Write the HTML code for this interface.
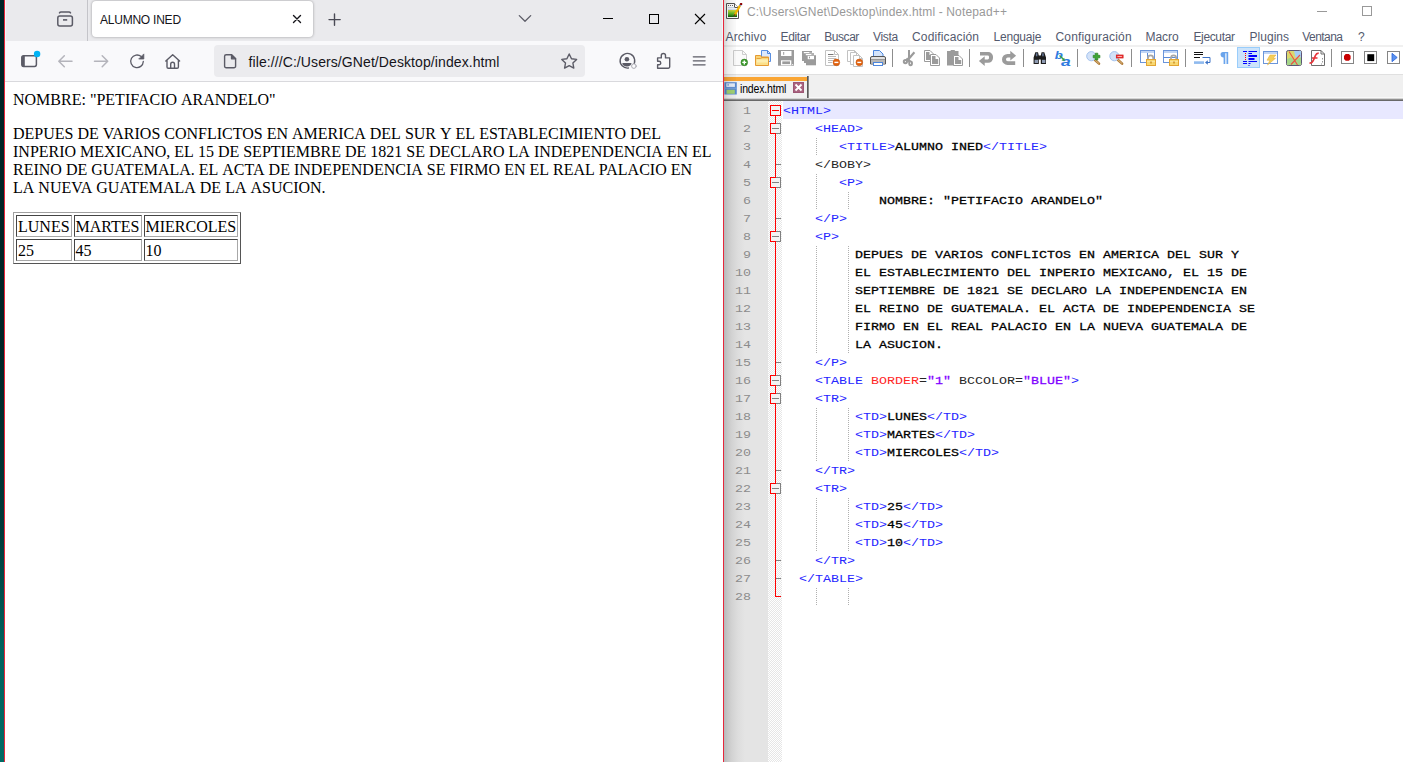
<!DOCTYPE html>
<html><head><meta charset="utf-8"><title>screenshot</title>
<style>
html,body{margin:0;padding:0}
body{width:1403px;height:762px;overflow:hidden;position:relative;background:#fff;font-family:"Liberation Sans",sans-serif}
.abs{position:absolute}
#strip{left:0;top:0;width:4px;height:762px;background:linear-gradient(#002426 0,#002426 45%,#003a3a 70%,#00625e 85%,#006a64 100%)}
.red{background:#e6283c;width:1px;top:0;height:762px}
#ff{left:5px;top:0;width:718px;height:762px;background:#fff;overflow:hidden}
#fftabs{left:1px;top:0;width:716px;height:41px;background:#eaeaed}
#ffnav{left:1px;top:41px;width:716px;height:40px;background:#f9f9fb}
#ffline{left:0;top:81px;width:718px;height:1px;background:#d9d9dd}
#fftab{left:87px;top:1px;width:221px;height:36px;background:#fff;border-radius:4px;box-shadow:0 0 3px rgba(0,0,0,.35)}
#url{left:209px;top:45px;width:371px;height:32px;border-radius:4px;background:#ebebee}
#ffpage{left:0;top:82px;width:718px;height:680px;font-family:"Liberation Serif",serif;font-size:16px;line-height:18px;color:#000}
#ffpage p{margin:0;position:absolute;left:8px;white-space:nowrap}
#ffpage p span{display:inline-block}
#ffpage table{position:absolute;left:8px;top:130px;border-spacing:2px;border:1px solid;border-color:#a0a0a0 #555 #555 #a0a0a0;border-collapse:separate}
#ffpage td{border:1px solid;border-color:#444 #a8a8a8 #a8a8a8 #444;padding:2px 1px 0 1px;line-height:18px}
svg{position:absolute;overflow:visible}
#npp{left:724px;top:0;width:679px;height:762px;background:#fff;overflow:hidden}
.menu{position:absolute;top:30px;font-size:12px;line-height:14px;color:#545a6e;white-space:nowrap}
.sep{position:absolute;top:49px;width:1px;height:18px;background:#8d8d8d}
#ed{left:0;top:101px;width:679px;height:661px;background:#fff}
#gut{left:0;top:0;width:44px;height:661px;background:linear-gradient(90deg,#b6babc 0,#c8c8c8 4px,#d3d3d3 8px,#dddddd 14px,#e4e4e4 21px)}
#fold{left:44px;top:0;width:14px;height:661px;background:repeating-conic-gradient(#fff 0 25%,#e6e6e6 0 50%) 0 0/2px 2px}
.ln{position:absolute;left:0;width:27px;text-align:right;font:13.33px/18px "Liberation Mono",monospace;color:#8c8c8c;height:18px;transform:scaleY(.86);transform-origin:0 12.7px;margin-top:.7px}
.cl{position:absolute;left:59px;font:13.33px/18px "Liberation Mono",monospace;white-space:pre;height:18px;color:#262626;transform:scaleY(.86);transform-origin:0 12.7px;margin-top:.7px}
.t{color:#2626ff}.a{color:#ff2626}.v{color:#8000ff;font-weight:normal;-webkit-text-stroke:.3px #8000ff}.b{color:#000;font-weight:normal;-webkit-text-stroke:.3px #000}
.fb{position:absolute;left:46px;width:9px;height:9px;border:1px solid #808080;background:#f3f3f3}
.fb i{position:absolute;left:1px;top:4px;width:7px;height:1px;background:#808080}
.ig{position:absolute;width:1px;background:repeating-linear-gradient(#fff 0 1px,#b0b0b0 1px 2px)}
</style></head><body>
<div id="strip" class="abs"></div>
<div class="abs red" style="left:4px"></div>

<div id="ff" class="abs">
<div class="abs" style="left:0;top:0;width:718px;height:82px;background:#f4f6f8"></div><div id="fftabs" class="abs"></div><div id="ffnav" class="abs"></div><div id="ffline" class="abs"></div>
<div class="abs" style="left:82px;top:0;width:1px;height:41px;background:#c4c4c9"></div>
<div id="fftab" class="abs"></div>
<div class="abs" style="left:95px;top:13px;font-size:12px;line-height:14px;color:#15141a;white-space:nowrap;letter-spacing:-.23px" id="tabtitle">ALUMNO INED</div>
<div id="url" class="abs"></div>
<div class="abs" id="urltext" style="left:243.5px;top:54px;font-size:14px;line-height:16px;color:#15141a;white-space:nowrap;letter-spacing:.09px">file:///C:/Users/GNet/Desktop/index.html</div>
<svg width="718" height="82" style="left:0;top:0" viewBox="5 0 718 82" fill="none" stroke="#5b5b66" stroke-width="1.3" stroke-linecap="round" stroke-linejoin="round">
<!-- firefox view / archive icon -->
<path d="M59.5 12.900q.5-.9 1.500-.9h8q1 0 1.500 .9" stroke-width="1.500"/><rect x="57.800" y="15.900" width="14.600" height="10.200" rx="2" stroke-width="1.500"/><path d="M63 19.900h4.200" stroke-width="1.600" stroke-linecap="butt"/>
<!-- tab close -->
<path d="M293.5 15.5l7 7m0-7l-7 7" stroke="#15141a" stroke-width="1.4"/>
<!-- plus -->
<path d="M329 19.600h11.200M334.500 14v11.200" stroke="#4a4a55" stroke-width="1.400"/>
<!-- chevron -->
<path d="M519.3 15.6l5.7 5.6l5.7-5.6"/>
<!-- window controls -->
<path d="M603 18.5h10" stroke="#000" stroke-width="1" stroke-linecap="butt"/>
<rect x="649.5" y="14.5" width="9" height="9" stroke="#000" stroke-width="1" stroke-linejoin="miter"/>
<path d="M695 14l10 10m0-10l-10 10" stroke="#000" stroke-width="1.1" stroke-linecap="butt"/>
<!-- sidebar icon -->
<rect x="21.8" y="55.8" width="14.6" height="10.6" rx="1.8" stroke-width="1.5"/><path d="M22 57.5a2 2 0 0 1 2-2h.8v11.400H24a2 2 0 0 1-2-2z" fill="#5b5b66" stroke="none"/>
<circle cx="37.1" cy="54" r="3.2" fill="#00b3f4" stroke="none"/>
<!-- back / forward (disabled) -->
<path d="M72 61.3H59M64.3 55.8l-5.5 5.500l5.500 5.500" stroke="#b4b4bb" stroke-width="1.500"/>
<path d="M94.500 61.300h13M102.200 55.800l5.500 5.500l-5.500 5.500" stroke="#b4b4bb" stroke-width="1.500"/>
<!-- reload -->
<path d="M143.300 61.500a6.300 6.300 0 1 1-2.100-4.900"/><path d="M143.800 54.300v4.700h-4.700z" fill="#5b5b66" stroke-width="0.800"/>
<!-- home -->
<path d="M165.800 61l6.900-6.300l6.900 6.300M167 60.200v6.800a1.300 1.300 0 0 0 1.300 1.300h8.800a1.300 1.300 0 0 0 1.300-1.300v-6.800M170.700 68.200v-4a1.900 1.900 0 0 1 3.800 0v4" stroke-width="1.400"/>
<!-- page icon -->
<path d="M224.600 56.300a1.600 1.600 0 0 1 1.600-1.600h5.300l4.100 4.100v7.400a1.600 1.600 0 0 1-1.600 1.600h-7.800a1.600 1.600 0 0 1-1.600-1.600z" stroke-width="1.400"/><path d="M231.500 54.700v4.100h4.100z" fill="#5b5b66"/>
<!-- star -->
<path d="M569.200 54l2.300 4.700l5.100 .7l-3.700 3.600l.9 5.100l-4.600-2.400l-4.600 2.400l.9-5.100l-3.700-3.600l5.100-.7z" stroke-width="1.400"/>
<!-- account -->
<path d="M632.700 65.800a7.300 7.300 0 1 0-4.300 2.200" stroke-width="1.400"/><circle cx="626.900" cy="59.200" r="2.300" fill="#5b5b66" stroke="none"/><path d="M622.300 63h9.200a4.600 3.600 0 0 1-9.200 0z" fill="#5b5b66" stroke="none"/>
<circle cx="633.900" cy="66.100" r="2.300" fill="#fbfbfd" stroke="#a8a8b0" stroke-width="1"/>
<!-- extension -->
<path d="M657.600 61.300v-3.400h3.700v-2.300a2.100 2.100 0 0 1 4.200 0v2.300h4.200v8.900a1.500 1.500 0 0 1-1.500 1.500h-10.600v-3.500h1.400a1.750 1.750 0 0 0 0-3.500z" stroke-width="1.400"/>
<!-- hamburger -->
<path d="M693.300 56.800h11.800M693.300 60.800h11.800M693.300 64.800h11.800" stroke-width="1.300"/>
</svg>
<div id="ffpage" class="abs">
<p style="top:9px"><span>NOMBRE:</span> <span>"PETIFACIO</span> <span>ARANDELO"</span></p>
<p style="top:43px"><span>DEPUES</span> <span>DE</span> <span>VARIOS</span> <span>CONFLICTOS</span> <span>EN</span> <span>AMERICA</span> <span>DEL</span> <span>SUR</span> <span>Y</span> <span>EL</span> <span>ESTABLECIMIENTO</span> <span>DEL</span><br><span>INPERIO</span> <span>MEXICANO,</span> <span>EL</span> <span>15</span> <span>DE</span> <span>SEPTIEMBRE</span> <span>DE</span> <span>1821</span> <span>SE</span> <span>DECLARO</span> <span>LA</span> <span>INDEPENDENCIA</span> <span>EN</span> <span>EL</span><br><span>REINO</span> <span>DE</span> <span>GUATEMALA.</span> <span>EL</span> <span>ACTA</span> <span>DE</span> <span>INDEPENDENCIA</span> <span>SE</span> <span>FIRMO</span> <span>EN</span> <span>EL</span> <span>REAL</span> <span>PALACIO</span> <span>EN</span><br><span>LA</span> <span>NUEVA</span> <span>GUATEMALA</span> <span>DE</span> <span>LA</span> <span>ASUCION.</span></p>
<table><tr><td>LUNES</td><td>MARTES</td><td>MIERCOLES</td></tr><tr><td>25</td><td>45</td><td>10</td></tr></table>
</div>
</div>
<div class="abs red" style="left:723px"></div>
<div id="npp" class="abs">
<div class="abs" id="npptitle" style="left:23px;top:5px;font-size:12px;line-height:14px;color:#999;white-space:nowrap;letter-spacing:.15px">C:\Users\GNet\Desktop\index.html - Notepad++</div>
<div class="menu" id="m0" style="left:1.5px;letter-spacing:0.15px">Archivo</div>
<div class="menu" id="m1" style="left:56.6px;letter-spacing:-0.36px">Editar</div>
<div class="menu" id="m2" style="left:100.3px;letter-spacing:-0.46px">Buscar</div>
<div class="menu" id="m3" style="left:149.0px;letter-spacing:-0.35px">Vista</div>
<div class="menu" id="m4" style="left:188.0px;letter-spacing:0.15px">Codificación</div>
<div class="menu" id="m5" style="left:269.6px;letter-spacing:-0.23px">Lenguaje</div>
<div class="menu" id="m6" style="left:331.5px;letter-spacing:0.17px">Configuración</div>
<div class="menu" id="m7" style="left:421.6px;letter-spacing:-0.07px">Macro</div>
<div class="menu" id="m8" style="left:469.4px;letter-spacing:-0.34px">Ejecutar</div>
<div class="menu" id="m9" style="left:525.5px;letter-spacing:0.03px">Plugins</div>
<div class="menu" id="m10" style="left:578.3px;letter-spacing:-0.55px">Ventana</div>
<div class="menu" id="m11" style="left:634.0px;letter-spacing:0px">?</div>
<div class="abs" style="left:0;top:45px;width:679px;height:2px;background:#f0f0f0"></div>
<div class="abs" style="left:0;top:74px;width:679px;height:27px;background:#f0f0f0"></div>
<div class="abs" style="left:0;top:74px;width:679px;height:1px;background:#e0e0e0"></div>
<div class="abs" style="left:0;top:97px;width:679px;height:4px;background:linear-gradient(#f8f8f8 0 1px,#d4d4d4 1px 2px,#909090 2px 3px,#686868 3px 4px)"></div>
<div class="sep" style="left:168px"></div>
<div class="sep" style="left:245px"></div>
<div class="sep" style="left:299px"></div>
<div class="sep" style="left:353px"></div>
<div class="sep" style="left:407px"></div>
<div class="sep" style="left:461px"></div>
<div class="sep" style="left:607px"></div>
<svg width="679" height="30" style="left:0;top:46px" viewBox="724 46 679 30" shape-rendering="auto"><path d="M733.5 50.5h9l4 4v11h-13z" fill="#fafafa" stroke="#cdcdcd"/><path d="M742.5 50.5v4h4" fill="none" stroke="#cdcdcd"/><circle cx="744.3" cy="62.4" r="3.3" fill="#3c9c2c" stroke="#2a7a1c" stroke-width=".6"/><path d="M742.3 62.4h4M744.300 60.400v4" stroke="#fff" stroke-width="1.400"/>
<path d="M761.500 50.500h6l3 3v8h-9z" fill="#dce9fc" stroke="#5a8fe0"/><path d="M767.500 50.500v3h3" fill="none" stroke="#4d86dc"/><path d="M755.500 55.500h5l1 1.500h7v8.500h-13z" fill="#f9d477" stroke="#e59a32"/><path d="M756.500 58.500h4l1.500-1h6" fill="none" stroke="#e2952a" stroke-width=".8"/><rect x="756.500" y="59.300" width="11.500" height="5.200" fill="#fdeeb0"/><rect x="756.500" y="62.500" width="11.500" height="2" fill="#fbe089"/>
<rect x="778" y="50" width="16" height="15.700" fill="#9b9b9b"/><rect x="781" y="51" width="10.500" height="5" fill="#fff"/><rect x="783.200" y="52" width="1" height="2.800" fill="#9b9b9b"/><rect x="781" y="60.300" width="10.300" height="5" fill="#fff"/><rect x="782.300" y="61.400" width="7.700" height="2.700" fill="#9b9b9b"/><rect x="792.200" y="64" width="1" height="1" fill="#fff"/>
<rect x="802" y="51" width="10" height="10" fill="#9b9b9b"/><rect x="803.800" y="52" width="5.500" height="1.300" fill="#fff"/><rect x="804" y="53" width="10" height="10" fill="#9b9b9b"/><path d="M804 53h10" stroke="#fff" stroke-width=".5"/><rect x="805.800" y="54" width="5.500" height="1.300" fill="#fff"/><rect x="806" y="55" width="10" height="10.300" fill="#9b9b9b"/><path d="M806 55h10" stroke="#fff" stroke-width=".5"/><rect x="807.700" y="56" width="6.300" height="3.200" fill="#fff"/><rect x="809" y="56.600" width="1" height="1.800" fill="#9b9b9b"/>
<path d="M825.5 50.5h9l4 4v11h-13z" fill="#fff" stroke="#c2c2c2"/><path d="M834.5 50.5v4h4" fill="none" stroke="#c2c2c2"/><path d="M828 54.500h5.500" stroke="#777" stroke-width="1"/><path d="M828 56.500h8M828 58.500h8M828 60.500h5M828 62.500h4" stroke="#b4b4b4" stroke-width=".9"/><circle cx="836.400" cy="62.400" r="3.300" fill="#e2620e" stroke="#c8540a" stroke-width=".6"/><path d="M834.400 62.400h4" stroke="#fff" stroke-width="1.400"/>
<path d="M847.5 50.5h7l2 2v9h-9z" fill="#fff" stroke="#c2c2c2"/><path d="M854.5 50.5v2h2" fill="none" stroke="#c2c2c2"/><path d="M850.5 52.5h6l3 3v9h-9z" fill="#fff" stroke="#c2c2c2"/><path d="M856.5 52.5v3h3" fill="none" stroke="#c2c2c2"/><path d="M853.5 55.5h6l3 3v8h-9z" fill="#fff" stroke="#c2c2c2"/><path d="M859.5 55.5v3h3" fill="none" stroke="#c2c2c2"/><circle cx="859.300" cy="62.400" r="3.300" fill="#e2620e" stroke="#c8540a" stroke-width=".6"/><path d="M857.300 62.400h4" stroke="#fff" stroke-width="1.400"/>
<path d="M873.500 57.500v-7h6l3.500 3.500v3.500z" fill="#d4e4fb" stroke="#4d86dc"/><path d="M872 56.500h12a1.500 1.500 0 0 1 1.500 1.500v6h-15v-6a1.500 1.500 0 0 1 1.500-1.500z" fill="#e2e2e2" stroke="#555"/><path d="M871 59.500h14" stroke="#999" stroke-width="1"/><path d="M871 60h14v3.500h-14z" fill="#b8b8b8"/><rect x="873.500" y="62.500" width="9" height="3" fill="#fff" stroke="#4d86dc"/>
<path d="M908 50h2v9.500h-2z" fill="#9b9b9b"/><path d="M913.600 51.600l1.600 1.500-6.800 7.900-1.700-1.400z" fill="#9b9b9b"/><path d="M906.300 58.600l4 3.400" stroke="#9b9b9b" stroke-width="2.600"/><circle cx="905.400" cy="61.600" r="1.600" fill="#fff" stroke="#9b9b9b" stroke-width="2"/><ellipse cx="910.600" cy="63.300" rx="1.400" ry="1.900" fill="#fff" stroke="#9b9b9b" stroke-width="1.900"/>
<path d="M924.5 50.5h5.5l3.500 3.500v7.5h-9.0z" fill="#fff" stroke="#9b9b9b"/><path d="M926 52h3.5v3h2.700v5.0h-6.2z" fill="#9b9b9b"/><path d="M930.5 54.5h5.5l3.500 3.500v7.5h-9.0z" fill="#fff" stroke="#9b9b9b"/><path d="M932 56h3.5v3h2.700v5.0h-6.2z" fill="#9b9b9b"/>
<path d="M947 51h3.300l.7-1h3.500l.7 1h3.300v14.500h-11.500z" fill="#9b9b9b"/><path d="M953.5 55.5h5.5l3.500 3.500v6.5h-9.0z" fill="#fff" stroke="#9b9b9b"/><path d="M955 57h3.5v3h2.700v4.0h-6.2z" fill="#9b9b9b"/>
<path d="M980 52h8.200a4.800 4.800 0 0 1 4.800 4.800v1.200a4.800 4.800 0 0 1-4.800 4.800h-3.500v3.200l-5.800-4.900 5.800-4.900v3.200h3a1.300 1.300 0 0 0 1.300-1.300v-1.300a1.300 1.300 0 0 0-1.300-1.300h-7.700z" fill="#9b9b9b"/>
<path d="M1010.300 50.800l5.800 4.900-5.800 4.900v-3h-2.500a1.800 1.800 0 0 0 0 3.600h7.400v3.700h-7.700a5.500 5.500 0 0 1 0-11h2.800z" fill="#9b9b9b"/>
<path d="M1035.300 52.300h2.700l.8 3.200h2l.8-3.200h2.700l1.700 5.200v6.500h-5.200v-4.500h-2v4.500h-5.200v-6.500z" fill="#1d1d1d"/><rect x="1034.600" y="59.800" width="3.400" height="3.200" fill="#8d9ab2"/><rect x="1042" y="59.800" width="3.400" height="3.200" fill="#8d9ab2"/><path d="M1035.900 53.200h1.500v3h-1.500zM1042.200 53.200h1.500v3h-1.500z" fill="#66789a"/>
<text transform="translate(1054.800,58.500) scale(1.150,1)" font-family="Liberation Sans" font-style="italic" font-weight="bold" font-size="11.500" fill="#2f7be0">b</text><text transform="translate(1061,66) scale(1.300,1)" font-family="Liberation Sans" font-style="italic" font-weight="bold" font-size="13.500" fill="#2f7be0">a</text><path d="M1059.500 55.500l4 3.800" stroke="#3aa040" stroke-width="1.300"/><path d="M1064.800 60.800l-3.300-.3 2.800-2.700z" fill="#3aa040"/>
<path d="M1095.0 60l4 3.600" stroke="#b07c3a" stroke-width="2.600" stroke-linecap="round"/><path d="M1095.3 60.2l3.400 3" stroke="#e8c890" stroke-width=".8" stroke-linecap="round"/><circle cx="1091.3" cy="56.200" r="4.600" fill="#d3e2f8" stroke="#a4c3ee"/><path d="M1095.300 53.200h2.500v2.100h2.100v2.500h-2.100v2.100h-2.500v-2.100h-2.100v-2.500h2.100z" fill="#3ea636" stroke="#2b8226" stroke-width=".7"/>
<path d="M1118.1000000000001 60l4 3.600" stroke="#b07c3a" stroke-width="2.600" stroke-linecap="round"/><path d="M1118.4 60.2l3.400 3" stroke="#e8c890" stroke-width=".8" stroke-linecap="round"/><circle cx="1114.4" cy="56.200" r="4.600" fill="#d3e2f8" stroke="#a4c3ee"/><rect x="1116.300" y="55" width="6.800" height="3" fill="#f23a3a" stroke="#cc1616" stroke-width=".7"/><path d="M1117.500 56.500h4.400" stroke="#ffd0d0" stroke-width=".8"/>
<rect x="1140.5" y="50.5" width="14" height="12" fill="#fff" stroke="#6a95da"/><rect x="1141" y="51" width="13" height="2" fill="#c0d5f5"/><path d="M1147.500 53v9.500" stroke="#5a8ad6"/><path d="M1148 60v-2a2.600 2.600 0 0 1 5.200 0v2" fill="none" stroke="#a8a8a8" stroke-width="1.700"/><rect x="1146.5" y="59.500" width="9" height="6" fill="#f8d870" stroke="#e2a432"/><path d="M1147 61.500h8" stroke="#fbe49a" stroke-width="1"/><rect x="1150.3" y="61.500" width="1.400" height="2" fill="#c88a20"/>
<rect x="1163.5" y="50.5" width="14" height="12" fill="#fff" stroke="#6a95da"/><rect x="1164" y="51" width="13" height="2" fill="#c0d5f5"/><path d="M1163.500 57.500h14" stroke="#5a8ad6"/><path d="M1171 60v-2a2.600 2.600 0 0 1 5.200 0v2" fill="none" stroke="#a8a8a8" stroke-width="1.700"/><rect x="1169.5" y="59.500" width="9" height="6" fill="#f8d870" stroke="#e2a432"/><path d="M1170 61.500h8" stroke="#fbe49a" stroke-width="1"/><rect x="1173.3" y="61.500" width="1.400" height="2" fill="#c88a20"/>
<path d="M1194 52.500h9M1194 54.500h9M1194 57.500h6" stroke="#111" stroke-width="1"/><rect x="1194" y="61.300" width="10" height="2.600" fill="#8fbaee"/><path d="M1202.500 57.500h7.500v5h-3.500" fill="none" stroke="#3d73c6" stroke-width="1"/><path d="M1205 62.500l2.800-2.300v4.600z" fill="#3d73c6"/>
<path d="M1223 52h5.200v12h-1.700v-10.700h-1.200v10.700h-1.700v-6.500a2.750 2.750 0 0 1-.6-5.500z" fill="#6aa4ec"/>
<rect x="1237.500" y="47.500" width="22" height="20" fill="#cce4fb" stroke="#99cdfb"/><path d="M1243 51.500h4M1248.500 51.500h8.500M1248.500 53.500h3.500M1243 61.500h4M1248.500 61.500h8.500M1243 63.500h4M1248.500 63.500h2M1248.500 65.500h1" stroke="#0000ff" stroke-width="1"/><path d="M1248.500 56h8.500M1248.500 59h6" stroke="#0000ff" stroke-width="1.900"/><path d="M1245 53.500h1M1245 55.500h1M1245 57.500h1M1245 59.500h1" stroke="#ff0000" stroke-width="1"/>
<rect x="1263.5" y="51.5" width="14" height="12" fill="#fff" stroke="#6a95da"/><rect x="1264" y="52" width="13" height="2" fill="#c0d5f5"/><path d="M1270 55h6l-3 3.300h2.500l-8 6.700 2.500-4.800h-3z" fill="#f4cf5a" stroke="#e0a830" stroke-width=".5"/>
<rect x="1286.500" y="50.500" width="15" height="15" rx="1.800" fill="#dad86e" stroke="#5a5676"/><path d="M1294 51h7v6.500h-5.500z" fill="#a6cdf2"/><path d="M1287 59l4-1.500 3.500 2 6.500-2v7.500h-14z" fill="#a6d68a"/><path d="M1289 51.500l8.500 13.500M1300 55l-9 9.500" stroke="#f05040" stroke-width="1.100"/>
<path d="M1311.500 50.500h9.500l3.500 3.500v11.500h-13z" fill="#fff" stroke="#6e6e6e"/><path d="M1321 50.500v3.500h3.500" fill="none" stroke="#6e6e6e"/><path d="M1322.500 58v1.500M1322.500 61v1.500M1321 64h1" stroke="#9a9a9a" stroke-width="1"/><path d="M1309.500 63.200c2.500 0 3.400-1.400 4.300-3.700l1.600-4c.8-1.900 1.600-2.300 3.300-2.300M1312 58h5.500" fill="none" stroke="#e8343a" stroke-width="1.700"/>
<rect x="1341.5" y="51.500" width="12" height="12" fill="#fff" stroke="#858585"/><path d="M1345.700 54h3.200l1.700 1.700v3.400l-1.700 1.700h-3.200l-1.700-1.700v-3.400z" fill="#c80000"/>
<rect x="1364.5" y="51.500" width="12" height="12" fill="#fff" stroke="#858585"/><rect x="1367.300" y="54.200" width="6.900" height="6.900" fill="#000"/>
<rect x="1387.5" y="51.500" width="12" height="12" fill="#fff" stroke="#858585"/><path d="M1392 53.300l5.200 4.200-5.200 4.200z" fill="#5a92f0" stroke="#2a62d8" stroke-width=".8"/></svg>
<div class="abs" style="left:0;top:77px;width:83px;height:4px;background:#faa634"></div>
<div class="abs" style="left:0;top:81px;width:83px;height:17px;background:#f1f1f1"></div>
<div class="abs" style="left:83px;top:76px;width:2px;height:22px;background:linear-gradient(90deg,#5a5a5a 0 1px,#8a8a8a 1px 2px)"></div>
<div class="abs" id="npptab" style="left:15.5px;top:82px;font-size:12px;line-height:14px;color:#000;white-space:nowrap;letter-spacing:-.2px;transform:scaleX(.878);transform-origin:0 0">index.html</div>
<div class="abs" style="left:69px;top:82px;width:11px;height:11px;background:#a9637f;box-shadow:inset 0 0 0 1px #9c5674"></div>
<svg width="11" height="11" style="left:69px;top:82px" viewBox="0 0 11 11"><path d="M2.500 2.500l6 6m0-6l-6 6" stroke="#fff" stroke-width="1.800"/></svg>
<svg width="14" height="14" style="left:0;top:82px" viewBox="724 82 14 14"><rect x="724.400" y="82.200" width="12.400" height="12.300" fill="#5a8bd0"/><rect x="726.300" y="83.300" width="8.600" height="3.600" fill="#e8f0fc"/><rect x="727.600" y="83.800" width="1" height="2" fill="#5a8bd0"/><rect x="726.500" y="89.800" width="8.300" height="4" fill="#a4d474"/><path d="M724.400 88.200h12.400" stroke="#7fa8e0" stroke-width="1"/></svg>
<svg width="22" height="22" style="left:0;top:0" viewBox="724 0 22 22"><defs><linearGradient id="gg" x1="0" y1="0" x2="0" y2="1"><stop offset="0" stop-color="#d4dc3c"/><stop offset=".55" stop-color="#58b828"/><stop offset="1" stop-color="#0a5c0a"/></linearGradient></defs><path d="M726.500 3.500h8l4 4v11h-12z" fill="#fff" stroke="#555"/><path d="M734.500 3.500v4h4" fill="#fff" stroke="#555"/><path d="M728 5.500h1M730 5.500h1M732 5.500h1" stroke="#666"/><path d="M728 7.500h6.500M728 9.300h9" stroke="#bcd0e8" stroke-width=".8"/><rect x="728" y="10" width="9" height="7" fill="url(#gg)"/><path d="M740.300 5L734.600 15.200" stroke="#f2b200" stroke-width="2.300"/><path d="M735.100 14.400l-1.200 2.200" stroke="#5a4a20" stroke-width="1.600"/><path d="M740 5.600l.8-1.500" stroke="#7c9cd4" stroke-width="2.300"/><rect x="740.100" y="3" width="2.100" height="2" fill="#8b0000"/></svg>
<div class="abs" style="left:0;top:0;width:12px;height:101px;background:linear-gradient(90deg,rgba(0,0,0,.17),rgba(0,0,0,.08) 4px,rgba(0,0,0,.03) 10px,rgba(0,0,0,0) 16px)"></div>
<div class="abs" style="left:593px;top:11px;width:10px;height:1px;background:#999"></div>
<div class="abs" style="left:638px;top:6px;width:8px;height:8px;border:1px solid #999"></div>
<div id="ed" class="abs"><div id="gut" class="abs"></div><div id="fold" class="abs"></div>
<div class="abs" style="left:59px;top:0;width:620px;height:18px;background:#e8e8ff"></div>
<div class="ln" style="top:0px">1</div><div class="cl" style="top:0px"><span class="t">&lt;HTML&gt;</span></div>
<div class="ln" style="top:18px">2</div><div class="cl" style="top:18px">    <span class="t">&lt;HEAD&gt;</span></div>
<div class="ln" style="top:36px">3</div><div class="cl" style="top:36px">       <span class="t">&lt;TITLE&gt;</span><span class="b">ALUMNO INED</span><span class="t">&lt;/TITLE&gt;</span></div>
<div class="ln" style="top:54px">4</div><div class="cl" style="top:54px">    &lt;/BOBY&gt;</div>
<div class="ln" style="top:72px">5</div><div class="cl" style="top:72px">       <span class="t">&lt;P&gt;</span></div>
<div class="ln" style="top:90px">6</div><div class="cl" style="top:90px">            <span class="b">NOMBRE: &quot;PETIFACIO ARANDELO&quot;</span></div>
<div class="ln" style="top:108px">7</div><div class="cl" style="top:108px">    <span class="t">&lt;/P&gt;</span></div>
<div class="ln" style="top:126px">8</div><div class="cl" style="top:126px">    <span class="t">&lt;P&gt;</span></div>
<div class="ln" style="top:144px">9</div><div class="cl" style="top:144px">         <span class="b">DEPUES DE VARIOS CONFLICTOS EN AMERICA DEL SUR Y</span></div>
<div class="ln" style="top:162px">10</div><div class="cl" style="top:162px">         <span class="b">EL ESTABLECIMIENTO DEL INPERIO MEXICANO, EL 15 DE</span></div>
<div class="ln" style="top:180px">11</div><div class="cl" style="top:180px">         <span class="b">SEPTIEMBRE DE 1821 SE DECLARO LA INDEPENDENCIA EN</span></div>
<div class="ln" style="top:198px">12</div><div class="cl" style="top:198px">         <span class="b">EL REINO DE GUATEMALA. EL ACTA DE INDEPENDENCIA SE</span></div>
<div class="ln" style="top:216px">13</div><div class="cl" style="top:216px">         <span class="b">FIRMO EN EL REAL PALACIO EN LA NUEVA GUATEMALA DE</span></div>
<div class="ln" style="top:234px">14</div><div class="cl" style="top:234px">         <span class="b">LA ASUCION.</span></div>
<div class="ln" style="top:252px">15</div><div class="cl" style="top:252px">    <span class="t">&lt;/P&gt;</span></div>
<div class="ln" style="top:270px">16</div><div class="cl" style="top:270px">    <span class="t">&lt;TABLE </span><span class="a">BORDER</span>=<span class="v">"1"</span> BCCOLOR=<span class="v">"BLUE"</span><span class="t">&gt;</span></div>
<div class="ln" style="top:288px">17</div><div class="cl" style="top:288px">    <span class="t">&lt;TR&gt;</span></div>
<div class="ln" style="top:306px">18</div><div class="cl" style="top:306px">         <span class="t">&lt;TD&gt;</span><span class="b">LUNES</span><span class="t">&lt;/TD&gt;</span></div>
<div class="ln" style="top:324px">19</div><div class="cl" style="top:324px">         <span class="t">&lt;TD&gt;</span><span class="b">MARTES</span><span class="t">&lt;/TD&gt;</span></div>
<div class="ln" style="top:342px">20</div><div class="cl" style="top:342px">         <span class="t">&lt;TD&gt;</span><span class="b">MIERCOLES</span><span class="t">&lt;/TD&gt;</span></div>
<div class="ln" style="top:360px">21</div><div class="cl" style="top:360px">    <span class="t">&lt;/TR&gt;</span></div>
<div class="ln" style="top:378px">22</div><div class="cl" style="top:378px">    <span class="t">&lt;TR&gt;</span></div>
<div class="ln" style="top:396px">23</div><div class="cl" style="top:396px">         <span class="t">&lt;TD&gt;</span><span class="b">25</span><span class="t">&lt;/TD&gt;</span></div>
<div class="ln" style="top:414px">24</div><div class="cl" style="top:414px">         <span class="t">&lt;TD&gt;</span><span class="b">45</span><span class="t">&lt;/TD&gt;</span></div>
<div class="ln" style="top:432px">25</div><div class="cl" style="top:432px">         <span class="t">&lt;TD&gt;</span><span class="b">10</span><span class="t">&lt;/TD&gt;</span></div>
<div class="ln" style="top:450px">26</div><div class="cl" style="top:450px">    <span class="t">&lt;/TR&gt;</span></div>
<div class="ln" style="top:468px">27</div><div class="cl" style="top:468px">  <span class="t">&lt;/TABLE&gt;</span></div>
<div class="ln" style="top:486px">28</div><div class="cl" style="top:486px"></div>
<div class="ig" style="left:92px;top:36px;height:18px"></div>
<div class="ig" style="left:92px;top:72px;height:18px"></div>
<div class="ig" style="left:92px;top:90px;height:18px"></div>
<div class="ig" style="left:124px;top:90px;height:18px"></div>
<div class="ig" style="left:92px;top:144px;height:18px"></div>
<div class="ig" style="left:124px;top:144px;height:18px"></div>
<div class="ig" style="left:92px;top:162px;height:18px"></div>
<div class="ig" style="left:124px;top:162px;height:18px"></div>
<div class="ig" style="left:92px;top:180px;height:18px"></div>
<div class="ig" style="left:124px;top:180px;height:18px"></div>
<div class="ig" style="left:92px;top:198px;height:18px"></div>
<div class="ig" style="left:124px;top:198px;height:18px"></div>
<div class="ig" style="left:92px;top:216px;height:18px"></div>
<div class="ig" style="left:124px;top:216px;height:18px"></div>
<div class="ig" style="left:92px;top:234px;height:18px"></div>
<div class="ig" style="left:124px;top:234px;height:18px"></div>
<div class="ig" style="left:92px;top:306px;height:18px"></div>
<div class="ig" style="left:124px;top:306px;height:18px"></div>
<div class="ig" style="left:92px;top:324px;height:18px"></div>
<div class="ig" style="left:124px;top:324px;height:18px"></div>
<div class="ig" style="left:92px;top:342px;height:18px"></div>
<div class="ig" style="left:124px;top:342px;height:18px"></div>
<div class="ig" style="left:92px;top:396px;height:18px"></div>
<div class="ig" style="left:124px;top:396px;height:18px"></div>
<div class="ig" style="left:92px;top:414px;height:18px"></div>
<div class="ig" style="left:124px;top:414px;height:18px"></div>
<div class="ig" style="left:92px;top:432px;height:18px"></div>
<div class="ig" style="left:124px;top:432px;height:18px"></div>
<div class="ig" style="left:92px;top:486px;height:18px"></div>
<div class="ig" style="left:124px;top:486px;height:18px"></div>
<div class="abs" style="left:51px;top:15px;width:1px;height:481px;background:#ff0000"></div>
<div class="abs" style="left:51px;top:495px;width:6px;height:1px;background:#ff0000"></div>
<div class="abs" style="left:52px;top:63px;width:5px;height:1px;background:#808080"></div>
<div class="abs" style="left:52px;top:117px;width:5px;height:1px;background:#808080"></div>
<div class="abs" style="left:52px;top:261px;width:5px;height:1px;background:#808080"></div>
<div class="abs" style="left:52px;top:369px;width:5px;height:1px;background:#808080"></div>
<div class="abs" style="left:52px;top:459px;width:5px;height:1px;background:#808080"></div>
<div class="abs" style="left:52px;top:477px;width:5px;height:1px;background:#808080"></div>
<div class="fb" style="top:4px;border-color:#ff0000"><i style="background:#ff0000"></i></div>
<div class="fb" style="top:22px"><i></i></div>
<div class="abs" style="left:46px;top:22px;width:6px;height:11px;border:1px solid #ff0000;border-right:none;box-sizing:border-box"></div>
<div class="fb" style="top:76px"><i></i></div>
<div class="abs" style="left:46px;top:76px;width:6px;height:11px;border:1px solid #ff0000;border-right:none;box-sizing:border-box"></div>
<div class="fb" style="top:130px"><i></i></div>
<div class="abs" style="left:46px;top:130px;width:6px;height:11px;border:1px solid #ff0000;border-right:none;box-sizing:border-box"></div>
<div class="fb" style="top:274px"><i></i></div>
<div class="abs" style="left:46px;top:274px;width:6px;height:11px;border:1px solid #ff0000;border-right:none;box-sizing:border-box"></div>
<div class="fb" style="top:292px"><i></i></div>
<div class="abs" style="left:46px;top:292px;width:6px;height:11px;border:1px solid #ff0000;border-right:none;box-sizing:border-box"></div>
<div class="fb" style="top:382px"><i></i></div>
<div class="abs" style="left:46px;top:382px;width:6px;height:11px;border:1px solid #ff0000;border-right:none;box-sizing:border-box"></div>
</div>
</div>
</body></html>
